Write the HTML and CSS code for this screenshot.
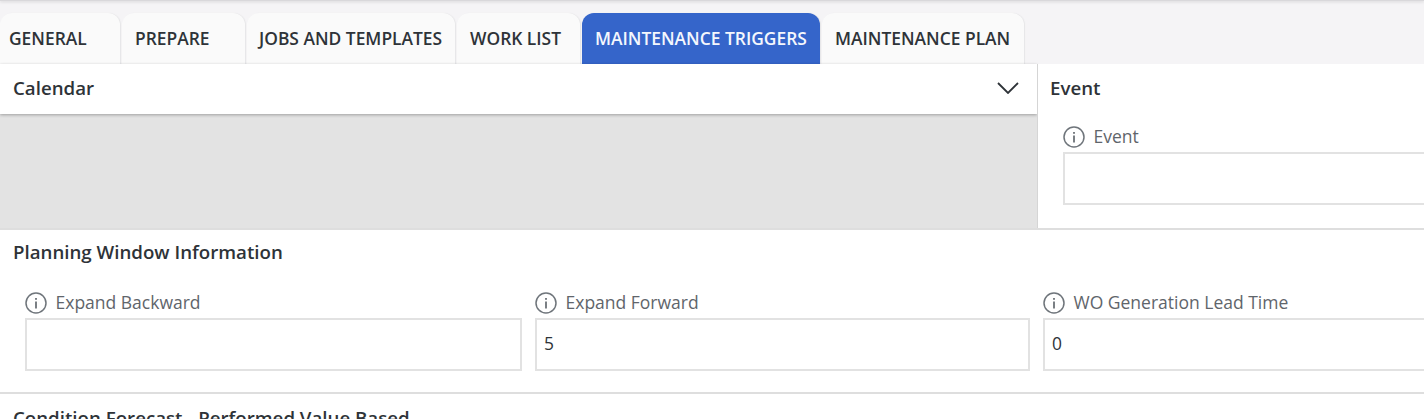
FILE: index.html
```html
<!DOCTYPE html>
<html lang="en">
<head>
    <meta charset="UTF-8">
    <meta name="viewport" content="width=device-width, initial-scale=1.0">
    <title>Maintenance Triggers</title>
    <link rel="stylesheet" href="styles.css">
</head>
<body>
    <div class="topbar"></div>
    <div class="tabs">
        <div class="tab tab-general">GENERAL</div>
        <div class="tab tab-prepare">PREPARE</div>
        <div class="tab tab-jobs">JOBS AND TEMPLATES</div>
        <div class="tab tab-work">WORK LIST</div>
        <div class="tab tab-active">MAINTENANCE TRIGGERS</div>
        <div class="tab tab-plan">MAINTENANCE PLAN</div>
    </div>

    <div class="top-row">
        <div class="calendar">
            <div class="calendar-head">
                <span class="section-title">Calendar</span>
                <svg class="chevron" width="22" height="12" viewBox="0 0 22 12">
                    <path d="M1 1 L11 11 L21 1" fill="none" stroke="#2e3338" stroke-width="1.8"/>
                </svg>
            </div>
        </div>
        <div class="event">
            <div class="event-head section-title">Event</div>
            <div class="field event-field">
                <div class="field-label">
                    <svg class="info" width="22" height="22" viewBox="0 0 22 22">
                        <circle cx="11" cy="11" r="10" fill="none" stroke="#6f757b" stroke-width="1.5"/>
                        <rect x="10.2" y="9.5" width="1.6" height="7" fill="#5a6066"/>
                        <rect x="10.2" y="6" width="1.6" height="1.8" fill="#5a6066"/>
                    </svg>
                    <span>Event</span>
                </div>
                <div class="input"></div>
            </div>
        </div>
    </div>

    <section class="planning">
        <div class="section-title planning-title">Planning Window Information</div>
        <div class="planning-fields">
            <div class="field">
                <div class="field-label">
                    <svg class="info" width="22" height="22" viewBox="0 0 22 22">
                        <circle cx="11" cy="11" r="10" fill="none" stroke="#6f757b" stroke-width="1.5"/>
                        <rect x="10.2" y="9.5" width="1.6" height="7" fill="#5a6066"/>
                        <rect x="10.2" y="6" width="1.6" height="1.8" fill="#5a6066"/>
                    </svg>
                    <span>Expand Backward</span>
                </div>
                <div class="input"></div>
            </div>
            <div class="field">
                <div class="field-label">
                    <svg class="info" width="22" height="22" viewBox="0 0 22 22">
                        <circle cx="11" cy="11" r="10" fill="none" stroke="#6f757b" stroke-width="1.5"/>
                        <rect x="10.2" y="9.5" width="1.6" height="7" fill="#5a6066"/>
                        <rect x="10.2" y="6" width="1.6" height="1.8" fill="#5a6066"/>
                    </svg>
                    <span>Expand Forward</span>
                </div>
                <div class="input">5</div>
            </div>
            <div class="field field-wide">
                <div class="field-label">
                    <svg class="info" width="22" height="22" viewBox="0 0 22 22">
                        <circle cx="11" cy="11" r="10" fill="none" stroke="#6f757b" stroke-width="1.5"/>
                        <rect x="10.2" y="9.5" width="1.6" height="7" fill="#5a6066"/>
                        <rect x="10.2" y="6" width="1.6" height="1.8" fill="#5a6066"/>
                    </svg>
                    <span>WO Generation Lead Time</span>
                </div>
                <div class="input">0</div>
            </div>
        </div>
    </section>

    <section class="forecast">
        <div class="section-title">Condition Forecast - Performed Value Based</div>
    </section>
</body>
</html>
```

FILE: styles.css
```css
html, body {
    height: 100%;
}

body {
    margin: 0;
    height: 419px;
    overflow: hidden;
    background-color: #f5f4f6;
    font-family: 'Open Sans', sans-serif;
    color: #2e3338;
}

.topbar {
    height: 1px;
    background-color: #d9d8db;
    box-shadow: 0 1px 3px rgba(0, 0, 0, 0.2);
}

.tabs {
    display: flex;
    gap: 2px;
    height: 51px;
    margin-top: 12px;
}

.tab {
    box-sizing: border-box;
    padding: 14px 0 0 13px;
    font-size: 17.4px;
    font-weight: 600;
    line-height: 22px;
    white-space: nowrap;
    background-color: #fafafa;
    border-radius: 12px 12px 0 0;
    box-shadow: 1px 0 1px #e6e6e8;
}

.tab-general {
    width: 120px;
    padding-left: 9px;
}

.tab-prepare {
    width: 123px;
}

.tab-jobs {
    width: 208px;
    padding-left: 12px;
}

.tab-work {
    width: 123px;
}

.tab-active {
    width: 238px;
    background-color: #3565ca;
    color: #f4f7fd;
}

.tab-plan {
    width: 202px;
}

.top-row {
    display: flex;
    height: 164px;
}

.section-title {
    font-size: 18.7px;
    font-weight: 600;
    line-height: 24px;
    white-space: nowrap;
}

.calendar {
    width: 1037px;
    background-color: #e3e3e3;
}

.calendar-head {
    box-sizing: border-box;
    display: flex;
    justify-content: space-between;
    align-items: center;
    height: 50px;
    padding: 0 18px 2px 13px;
    background-color: #fff;
    box-shadow: 0 1px 3px rgba(0, 0, 0, 0.3);
}

.event {
    flex: 1;
    box-sizing: border-box;
    padding: 12px 0 0 12px;
    background-color: #fff;
    border-left: 1px solid #d5d5d5;
}

.event-field {
    margin: 25px 0 0 13px;
}

.field-label {
    display: flex;
    align-items: center;
    gap: 9px;
    height: 24px;
    margin-bottom: 3px;
    font-size: 17.5px;
    line-height: 22px;
    color: #5f656b;
    white-space: nowrap;
}

.field-label span {
    margin: -2px 0 0 -0.5px;
}

.info {
    flex: none;
}

.input {
    box-sizing: border-box;
    height: 53px;
    padding-left: 7px;
    background-color: #fff;
    border: 2px solid #e2e2e2;
    font-size: 17.4px;
    line-height: 46px;
    color: #2e3338;
}

.planning {
    box-sizing: border-box;
    height: 166px;
    padding: 10px 0 0 13px;
    background-color: #fff;
    border-top: 2px solid #dedede;
    border-bottom: 2px solid #dedede;
}

.planning-fields {
    display: grid;
    grid-template-columns: 497px 495px 1fr;
    gap: 13px;
    margin: 27px -2px 0 12px;
    overflow: hidden;
}

.field-wide .input {
    margin-right: -40px;
}

.event-field .input {
    margin-right: -40px;
}

.forecast {
    padding: 12px 0 0 13px;
    background-color: #fff;
    height: 40px;
}
```
